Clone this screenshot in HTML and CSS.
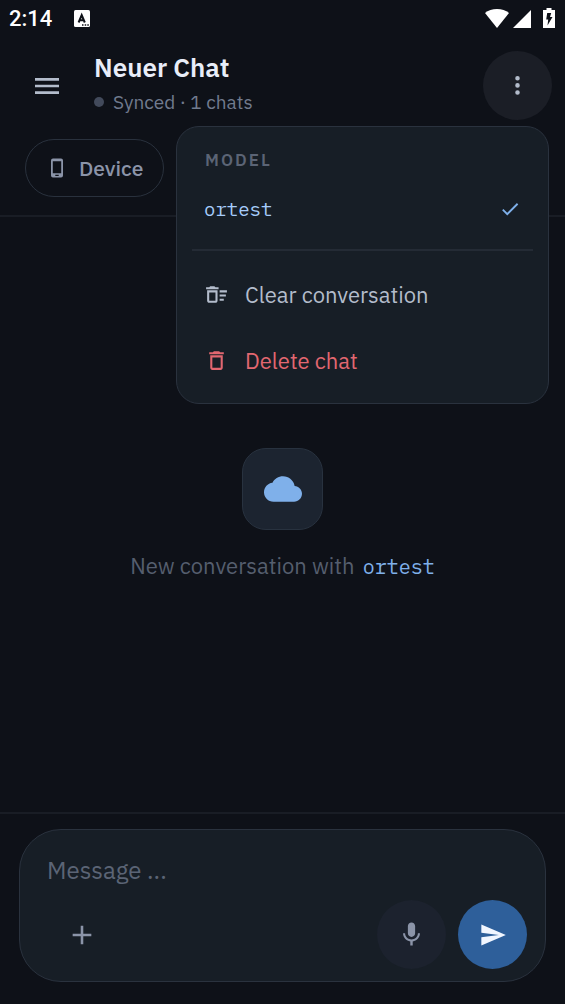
FILE: index.html
```html
<!DOCTYPE html>
<html lang="de">
<head>
<meta charset="utf-8">
<meta name="viewport" content="width=device-width, initial-scale=1">
<title>Neuer Chat</title>
<link rel="stylesheet" href="styles.css">
</head>
<body>
<div class="status-bar">
  <span class="clock">2:14</span>
  <svg class="app-badge" viewBox="0 0 16 18" aria-hidden="true"><rect width="16" height="17" rx="1.5" fill="#fff"/><path d="M4.600 12.500 7.700 5l3.100 7.500M5.600 10.300h4.200" fill="none" stroke="#0e1118" stroke-width="2"/><path d="M8 15h1.500M10.700 15h1.500M13.300 15h1.500" stroke="#0e1118" stroke-width="1.500"/></svg>
  <div class="status-icons">
    <svg class="wifi" viewBox="0 0 24 19" aria-hidden="true"><path d="M12 19 0 4C3 1.300 7.500 0 12 0s9 1.300 12 4z"/></svg>
    <svg class="signal" viewBox="0 0 18 18" aria-hidden="true"><path d="M18 0v18H0z"/></svg>
    <svg class="battery" viewBox="0 0 12 20" aria-hidden="true"><path d="M3.500 0h5v2H12v18H0V2h3.500z"/><path d="M4.200 5h4L7 9h2.500l-5 8.500.7-6H3.200z" fill="#0e1118"/></svg>
  </div>
</div>

<header class="header">
  <div class="top-row">
    <button class="icon-button" type="button" aria-label="Open sidebar">
      <svg class="icon icon-menu" viewBox="0 0 24 24"><path d="M3 18h18v-2H3v2zm0-5h18v-2H3v2zm0-7v2h18V6H3z"/></svg>
    </button>
    <div class="heading">
      <h1 class="title">Neuer Chat</h1>
      <p class="sync"><span class="sync-dot"></span>Synced · 1 chats</p>
    </div>
    <button class="icon-button icon-button-active" type="button" aria-label="More options" aria-expanded="true">
      <svg class="icon" viewBox="0 0 24 24"><path d="M12 7.300a2.200 2.200 0 1 0 0-4.400 2.200 2.200 0 0 0 0 4.400zm0 6.800a2.200 2.200 0 1 0 0-4.400 2.200 2.200 0 0 0 0 4.400zm0 6.800a2.200 2.200 0 1 0 0-4.400 2.200 2.200 0 0 0 0 4.400z"/></svg>
    </button>
  </div>
  <button class="chip" type="button">
    <svg class="chip-icon" viewBox="0 0 14 20" aria-hidden="true"><path fill-rule="evenodd" d="M3 .5h8a2 2 0 0 1 2 2v15a2 2 0 0 1-2 2H3a2 2 0 0 1-2-2v-15a2 2 0 0 1 2-2zm-.2 2.700v12h8.400v-12zM5.300 16.800v1.200h3.400v-1.200z"/></svg>
    Device
  </button>

  <div class="menu" role="menu">
    <div class="menu-label">MODEL</div>
    <button class="menu-item menu-model" type="button" role="menuitemradio" aria-checked="true">
      ortest
      <svg class="check" viewBox="0 0 24 24" aria-hidden="true"><path d="M9 16.170 4.830 12l-1.420 1.410L9 19 21 7l-1.410-1.410z"/></svg>
    </button>
    <hr class="menu-divider">
    <button class="menu-item" type="button" role="menuitem">
      <svg class="icon" viewBox="0 0 24 24" aria-hidden="true"><path d="M15 16h4v2h-4zm0-8h7v2h-7zm0 4h6v2h-6zM3 18c0 1.100.9 2 2 2h6c1.100 0 2-.9 2-2V8H3v10zm2-8h6v8H5v-8zm5-6H6L5 5H2v2h12V5h-3z"/></svg>
      Clear conversation
    </button>
    <button class="menu-item menu-danger" type="button" role="menuitem">
      <svg class="icon" viewBox="0 0 24 24" aria-hidden="true"><path d="M16 9v10H8V9h8m-1.500-6h-5l-1 1H5v2h14V4h-3.500l-1-1zM18 7H6v12c0 1.100.9 2 2 2h8c1.100 0 2-.9 2-2V7z"/></svg>
      Delete chat
    </button>
  </div>
</header>

<main class="empty-state">
  <div class="tile">
    <svg class="cloud" viewBox="0 0 24 24" aria-hidden="true"><path d="M19.350 10.040C18.670 6.590 15.640 4 12 4 9.110 4 6.600 5.640 5.350 8.040 2.340 8.360 0 10.910 0 14c0 3.310 2.690 6 6 6h13c2.760 0 5-2.240 5-5 0-2.640-2.050-4.780-4.650-4.960z"/></svg>
  </div>
  <p class="empty-text">New conversation with <span class="model-name">ortest</span></p>
</main>

<footer class="footer">
  <form class="composer">
    <textarea class="message" rows="1" placeholder="Message ..." aria-label="Message"></textarea>
    <div class="actions">
      <button class="icon-button add" type="button" aria-label="Add attachment">
        <svg class="icon icon-large" viewBox="0 0 24 24"><path d="M13.100 4v6.900H20v2.200h-6.900V20h-2.200v-6.900H4v-2.200h6.900V4z"/></svg>
      </button>
      <button class="icon-button mic" type="button" aria-label="Record voice">
        <svg class="icon icon-mic" viewBox="0 0 24 24"><path d="M12 14c1.660 0 3-1.340 3-3V5c0-1.660-1.340-3-3-3S9 3.340 9 5v6c0 1.660 1.340 3 3 3zm5.300-3c0 3-2.540 5.100-5.300 5.100S6.700 14 6.700 11H5c0 3.410 2.720 6.230 6 6.720V21h2v-3.280c3.280-.48 6-3.300 6-6.720z"/></svg>
      </button>
      <button class="icon-button send" type="submit" aria-label="Send">
        <svg class="icon icon-large" viewBox="0 0 24 24"><path d="M2.010 21 23 12 2.010 3 2 10l15 2-15 2z"/></svg>
      </button>
    </div>
  </form>
</footer>
</body>
</html>
```
FILE: styles.css
```css
* {
  box-sizing: border-box;
}

body {
  display: flex;
  flex-direction: column;
  min-height: 100vh;
  margin: 0;
  background: #0e1118;
  color: #b3bccb;
  font-family: "IBM Plex Sans", Roboto, sans-serif;
}

h1,
p {
  margin: 0;
}

button,
textarea {
  border: 0;
  padding: 0;
  background: none;
  color: inherit;
  font: inherit;
}

svg {
  display: block;
  flex: none;
  fill: currentColor;
}

.status-bar {
  display: flex;
  align-items: center;
  height: 38px;
  padding: 0 10px 0 9px;
  color: #fff;
}

.clock {
  font: 500 22px/28px Roboto, sans-serif;
}

.app-badge {
  width: 16px;
  height: 18px;
  margin-left: 22px;
}

.status-icons {
  display: flex;
  align-items: flex-end;
  gap: 4px;
  margin-left: auto;
  padding-bottom: 2px;
}

.wifi {
  width: 24px;
  height: 19px;
}

.signal {
  width: 18px;
  height: 18px;
}

.battery {
  width: 12px;
  height: 20px;
  margin-left: 8px;
}

.header {
  position: relative;
  padding: 13px 13px 18px 12px;
  border-bottom: 2px solid #191d25;
}

.top-row {
  display: flex;
  align-items: center;
}

.heading {
  flex: 1;
  padding-left: 13px;
}

.title {
  color: #e8edf8;
  font-size: 26px;
  font-weight: 600;
  line-height: 33px;
}

.sync {
  display: flex;
  align-items: center;
  gap: 9px;
  color: #717b8e;
  font-size: 19px;
  line-height: 36px;
}

.sync-dot {
  width: 10px;
  height: 10px;
  border-radius: 50%;
  background: #424a5b;
}

.icon-button {
  display: grid;
  place-items: center;
  flex: none;
  width: 69px;
  height: 69px;
  border-radius: 50%;
}

.icon-button-active {
  background: #1b1e26;
}

.icon {
  width: 25px;
  height: 25px;
}

.icon-large {
  width: 28px;
  height: 28px;
}

.icon-mic {
  width: 29px;
  height: 29px;
}

.icon-menu {
  width: 32px;
  height: 32px;
}

.chip {
  display: flex;
  align-items: center;
  gap: 15px;
  height: 58px;
  margin: 19px 0 0 13px;
  padding: 0 20px 0 24px;
  border: 1px solid #29313d;
  border-radius: 29px;
  color: #8b94a8;
  font-size: 21px;
  font-weight: 500;
}

.chip-icon {
  width: 14px;
  height: 20px;
}

.menu {
  position: absolute;
  z-index: 1;
  top: 88px;
  right: 16px;
  width: 373px;
  padding: 9px 0 10px;
  border: 1px solid #2a323e;
  border-radius: 23px;
  background: #171e26;
}

.menu-label {
  padding: 14px 28px 6px;
  color: #5b6475;
  font-size: 17px;
  font-weight: 600;
  line-height: 20px;
  letter-spacing: 2px;
}

.menu-item {
  display: flex;
  align-items: center;
  gap: 16px;
  width: 100%;
  height: 66px;
  padding: 0 27px;
  font-size: 22px;
  text-align: left;
}

.menu-model {
  justify-content: space-between;
  color: #a6ccfa;
  font-family: "IBM Plex Mono", "Liberation Mono", monospace;
  font-size: 19px;
}

.check {
  width: 22px;
  height: 22px;
  color: #7fb0ea;
}

.menu-danger {
  color: #e26770;
}

.menu-divider {
  height: 2px;
  margin: 7px 15px 10px;
  border: 0;
  background: #242b35;
}

.empty-state {
  display: flex;
  flex: 1;
  flex-direction: column;
  align-items: center;
  justify-content: center;
  gap: 22px;
}

.tile {
  display: grid;
  place-items: center;
  width: 81px;
  height: 82px;
  border: 1px solid #28323f;
  border-radius: 24px;
  background: #1c2430;
}

.cloud {
  width: 38px;
  height: 38px;
  color: #7fb0ea;
}

.empty-text {
  color: #555e6e;
  font-size: 22px;
  line-height: 28px;
}

.model-name {
  padding-left: 3px;
  color: #7fb0ea;
  font-family: "IBM Plex Mono", "Liberation Mono", monospace;
  font-size: 20px;
}

.footer {
  padding: 15px 19px 22px;
  border-top: 2px solid #191d25;
}

.composer {
  padding: 22px 18px 12px 27px;
  border: 1px solid #2a323e;
  border-radius: 42px;
  background: #171e26;
}

.message {
  display: block;
  width: 100%;
  height: 36px;
  outline: 0;
  resize: none;
  font-size: 24px;
  line-height: 36px;
}

.message::placeholder {
  color: #5b6475;
  opacity: 1;
}

.actions {
  display: flex;
  gap: 12px;
  margin-top: 12px;
  color: #8b94a8;
}

.add {
  margin-right: auto;
}

.mic {
  background: #1c222e;
}

.send {
  background: #2e5f9a;
  color: #f1f6ff;
}
```
